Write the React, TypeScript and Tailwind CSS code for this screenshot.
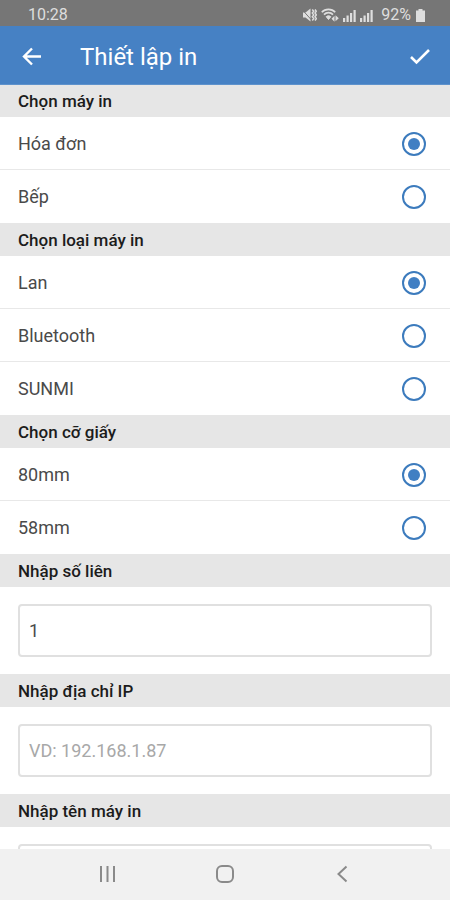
import { useState, type ReactNode } from "react";

interface Option {
  value: string;
  label: string;
}

const PRINTERS: Option[] = [
  { value: "bill", label: "Hóa đơn" },
  { value: "kitchen", label: "Bếp" },
];

const PRINTER_TYPES: Option[] = [
  { value: "lan", label: "Lan" },
  { value: "bluetooth", label: "Bluetooth" },
  { value: "sunmi", label: "SUNMI" },
];

const PAPER_SIZES: Option[] = [
  { value: "80", label: "80mm" },
  { value: "58", label: "58mm" },
];

const SECTION_TITLE =
  "flex h-[33px] w-full items-center bg-[#e6e6e6] px-[18px] pt-0.5 text-[17px] font-medium text-[#1c1c1c]";

function SignalBars(): ReactNode {
  return (
    <svg width="13" height="13" viewBox="0 0 13 13" fill="currentColor" aria-hidden="true">
      <path d="M0 9h2.200v4H0zM3.500 6.500h2.200V13H3.500zM7 4h2.200v9H7zM10.500 1h2.200v12h-2.200z" />
    </svg>
  );
}

function StatusBar(): ReactNode {
  return (
    <div className="flex h-[26px] shrink-0 items-center justify-between bg-[#767676] pt-1 pr-6 pl-7 text-[#dedede]">
      <span className="text-base leading-5">10:28</span>
      <div className="flex items-center gap-1">
        {/* muted speaker with vibration */}
        <svg width="15" height="14" viewBox="0 0 15 14" aria-hidden="true">
          <path d="M1 4.500h2.500L8.500.5v13L3.500 9.500H1z" fill="currentColor" />
          <path d="M0 1.500l10 11" stroke="#767676" strokeWidth="1" />
          <path
            d="M10.300 1.500l1.400 1.800L10.300 5l1.400 1.900-1.400 1.900 1.400 1.800-1.400 1.900M13 1.500l1.300 1.800L13 5l1.300 1.900L13 8.800l1.300 1.800L13 12.500"
            fill="none"
            stroke="currentColor"
            strokeWidth="1.500"
          />
        </svg>
        {/* wifi with traffic arrow */}
        <svg width="18" height="14" viewBox="0 0 18 14" fill="none" stroke="currentColor" aria-hidden="true">
          <path d="M.8 4.200C4.300.3 10.700.3 14.200 4.200" strokeWidth="1.700" />
          <path d="M3 6.700C5.500 4 9.500 4 12 6.700" strokeWidth="1.700" />
          <path d="M5.200 8.700C6.700 7.400 8.300 7.400 9.800 8.700L7.500 11.500z" fill="currentColor" />
          <path d="M10.500 10.800l3-3v6zM17.800 10.200l-3.300-3v6z" fill="currentColor" stroke="none" />
        </svg>
        <SignalBars />
        <SignalBars />
        <span className="ml-1 text-base leading-5">92%</span>
        <svg width="11" height="13" viewBox="0 0 11 13" fill="currentColor" aria-hidden="true">
          <path d="M3.500 0h4v1.500H10V13H1V1.500h2.500z" />
        </svg>
      </div>
    </div>
  );
}

function RadioSection({
  title,
  name,
  options,
}: {
  title: string;
  name: string;
  options: Option[];
}): ReactNode {
  const [selected, setSelected] = useState(options[0].value);

  return (
    <fieldset>
      <legend className={SECTION_TITLE}>{title}</legend>
      {options.map((o) => (
        <label
          key={o.value}
          className="flex h-[53px] cursor-pointer items-center justify-between border-b border-[#e8e8e8] pt-0.5 pr-6 pl-[18px] text-lg text-[#4a4a4a] last:border-transparent"
        >
          <span>{o.label}</span>
          <span className="grid place-items-center">
            <input
              type="radio"
              name={name}
              value={o.value}
              checked={selected === o.value}
              onChange={() => setSelected(o.value)}
              className="peer col-start-1 row-start-1 size-6 appearance-none rounded-full border-2 border-[#3c7bbd]"
            />
            <span className="pointer-events-none col-start-1 row-start-1 hidden size-3 rounded-full bg-[#417fc3] peer-checked:block" />
          </span>
        </label>
      ))}
    </fieldset>
  );
}

function FieldSection({
  id,
  title,
  initial = "",
  placeholder,
}: {
  id: string;
  title: string;
  initial?: string;
  placeholder?: string;
}): ReactNode {
  const [value, setValue] = useState(initial);

  return (
    <section>
      <label htmlFor={id} className={SECTION_TITLE}>
        {title}
      </label>
      <div className="px-[18px] py-[17px]">
        <input
          id={id}
          type="text"
          value={value}
          placeholder={placeholder}
          onChange={(e) => setValue(e.target.value)}
          className="block h-[53px] w-full rounded border-2 border-[#e0e0e0] px-[9px] text-lg text-[#4a4a4a] outline-none placeholder:text-[#a8a8a8] focus:border-[#4681c4]"
        />
      </div>
    </section>
  );
}

function NavBar(): ReactNode {
  return (
    <nav className="flex h-[51px] shrink-0 items-center justify-center gap-[93px] bg-[#f1f1f1] pb-0.5 text-[#8a8a8a]">
      <button type="button" aria-label="Gần đây">
        <svg width="24" height="24" viewBox="0 0 24 24" stroke="currentColor" strokeWidth="2">
          <path d="M5 4v16M11.500 4v16M18 4v16" />
        </svg>
      </button>
      <button type="button" aria-label="Trang chủ">
        <svg width="24" height="24" viewBox="0 0 24 24" fill="none" stroke="currentColor" strokeWidth="2">
          <rect x="4" y="4" width="16" height="16" rx="5" />
        </svg>
      </button>
      <button type="button" aria-label="Trở về">
        <svg width="24" height="24" viewBox="0 0 24 24" fill="none" stroke="currentColor" strokeWidth="2">
          <path d="M16.500 4.500L8.500 12l8 7.500" />
        </svg>
      </button>
    </nav>
  );
}

export default function App(): ReactNode {
  return (
    <div className="flex h-dvh flex-col bg-white font-['Roboto',sans-serif]">
      <StatusBar />
      <header className="z-10 flex h-[58px] shrink-0 items-center bg-[#4681c4] px-5 pt-1 text-white shadow-[0_1px_0_#5e92cc]">
        <button type="button" aria-label="Quay lại">
          <svg width="24" height="24" viewBox="0 0 24 24" fill="none" stroke="currentColor" strokeWidth="2.400">
            <path d="M21 11.500H4M12 3.500l-8 8 8 8" />
          </svg>
        </button>
        <h1 className="ml-9 flex-1 text-2xl">Thiết lập in</h1>
        <button type="button" aria-label="Lưu">
          <svg width="20" height="20" viewBox="0 0 20 20" fill="none" stroke="currentColor" strokeWidth="2.600">
            <path d="M1 10l5.500 5.500L19 3" />
          </svg>
        </button>
      </header>
      <main className="min-h-0 flex-1 overflow-y-auto [scrollbar-width:none]">
        <RadioSection title="Chọn máy in" name="printer" options={PRINTERS} />
        <RadioSection title="Chọn loại máy in" name="printer-type" options={PRINTER_TYPES} />
        <RadioSection title="Chọn cỡ giấy" name="paper-size" options={PAPER_SIZES} />
        <FieldSection id="copies" title="Nhập số liên" initial="1" />
        <FieldSection id="ip" title="Nhập địa chỉ IP" placeholder="VD: 192.168.1.87" />
        <FieldSection id="printer-name" title="Nhập tên máy in" />
      </main>
      <NavBar />
    </div>
  );
}
